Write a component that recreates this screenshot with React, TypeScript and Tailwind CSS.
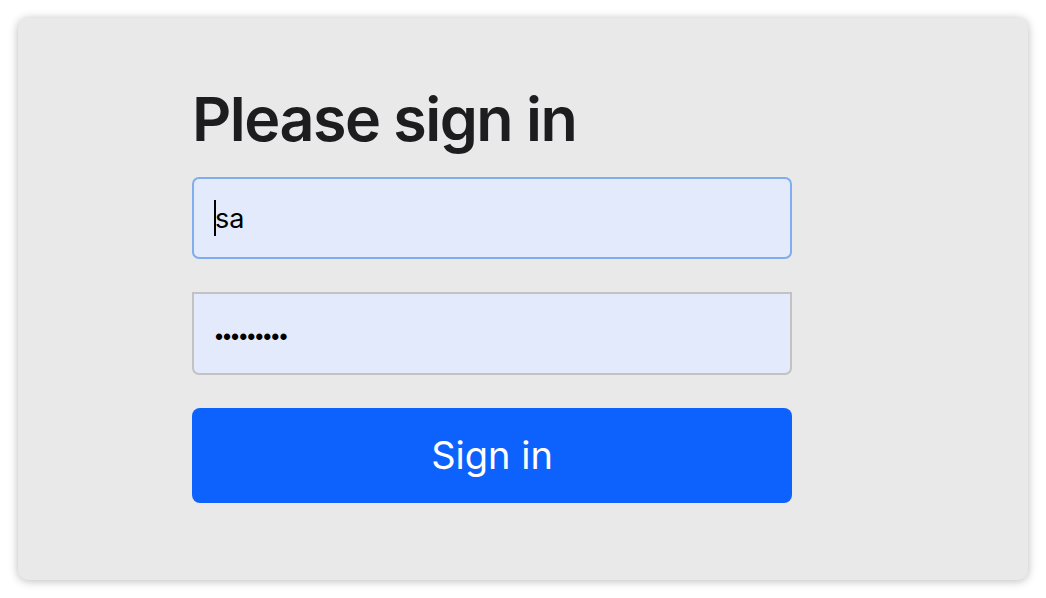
import { useState } from 'react';

export default function App() {
  const [username, setUsername] = useState('sa');
  const [password, setPassword] = useState('sapassw0r');

  return (
    <main className="h-[598px] w-full bg-white p-[18px] font-['Inter',sans-serif]">
      <div className="h-full rounded-[10px] bg-[#e9e9e9] pl-[174px] pt-[65px] shadow-[0_1px_10px_rgba(0,0,0,0.28)]">
        <form className="flex w-[600px] flex-col" onSubmit={(e) => e.preventDefault()}>
          <h1 className="mb-[21px] text-[61px] leading-[1.2] font-semibold tracking-tight text-[#1d1d1f]">
            Please sign in
          </h1>

          <div className="relative">
            <input
              className="h-[82px] w-full rounded-[7px] border-2 border-[#7fadee] bg-[#e2eafc] px-[21px] text-[27px] text-black outline-none"
              value={username}
              onChange={(e) => setUsername(e.target.value)}
              aria-label="Username"
            />
            {/* fake caret at the start of the field */}
            <span className="absolute top-[23px] left-[22px] h-[36px] w-[2px] bg-black" />
          </div>

          <input
            type="password"
            className="mt-[33px] h-[83px] w-full rounded-b-[7px] border-2 border-[#c2c2c2] bg-[#e2eafc] px-[21px] pt-[8px] font-['Liberation_Sans',sans-serif] text-[23px] text-black outline-none"
            value={password}
            onChange={(e) => setPassword(e.target.value)}
            aria-label="Password"
          />

          <button
            type="submit"
            className="mt-[33px] h-[95px] w-full rounded-[8px] bg-[#0d62fd] text-[38px] text-white"
          >
            Sign in
          </button>
        </form>
      </div>
    </main>
  );
}
